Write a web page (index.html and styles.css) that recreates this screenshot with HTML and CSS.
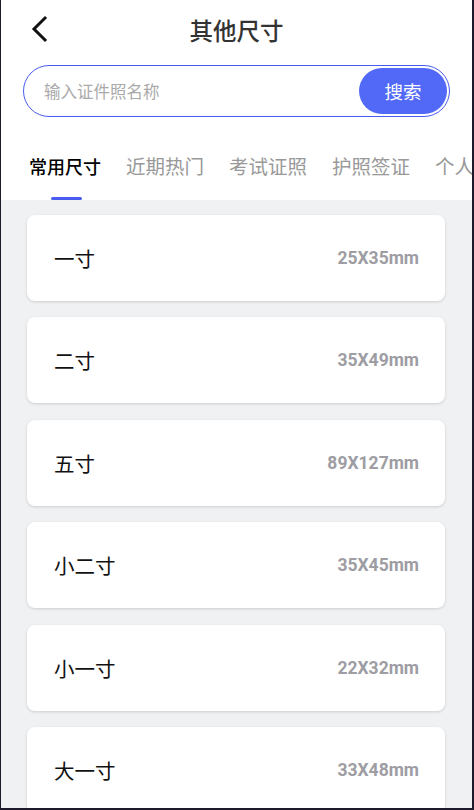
FILE: index.html
```html
<!DOCTYPE html>
<html>
<head>
  <meta charset="utf-8">
  <title>其他尺寸</title>
  <link rel="stylesheet" href="styles.css">
</head>
<body>
  <div class="page">
    <div class="header">
      <svg class="back" width="20" height="28" viewBox="0 0 20 28">
        <path d="M15 3 L4 14 L15 25" fill="none" stroke="#111" stroke-width="3" stroke-linecap="square"/>
      </svg>
      <h1>其他尺寸</h1>
    </div>

    <div class="search">
      <span class="placeholder">输入证件照名称</span>
      <button class="search-btn">搜索</button>
    </div>

    <div class="tabs">
      <div class="tab active">常用尺寸</div>
      <div class="tab">近期热门</div>
      <div class="tab">考试证照</div>
      <div class="tab">护照签证</div>
      <div class="tab">个人证照</div>
    </div>

    <div class="list">
      <div class="card"><span class="name">一寸</span><span class="size">25X35mm</span></div>
      <div class="card"><span class="name">二寸</span><span class="size">35X49mm</span></div>
      <div class="card"><span class="name">五寸</span><span class="size">89X127mm</span></div>
      <div class="card"><span class="name">小二寸</span><span class="size">35X45mm</span></div>
      <div class="card"><span class="name">小一寸</span><span class="size">22X32mm</span></div>
      <div class="card"><span class="name">大一寸</span><span class="size">33X48mm</span></div>
    </div>
  </div>
</body>
</html>
```

FILE: styles.css
```css
body {
  margin: 0;
  font-family: Roboto, "Noto Sans CJK SC", sans-serif;
}

.page {
  width: 474px;
  height: 810px;
  box-sizing: border-box;
  border-left: 1px solid #1d1b2b;
  border-right: 2px solid #1d1b2b;
  border-bottom: 2px solid #1d1b2b;
  background: #fff;
  overflow: hidden;
  display: flex;
  flex-direction: column;
}

.header {
  flex-shrink: 0;
  height: 60px;
  display: flex;
  align-items: center;
  justify-content: center;
  position: relative;
}

.back {
  position: absolute;
  left: 29px;
  top: 15px;
}

.header h1 {
  margin: 0;
  font-size: 23.5px;
  font-weight: 500;
  color: #333;
}

.search {
  flex-shrink: 0;
  margin: 5px 22px 0 22px;
  height: 52px;
  box-sizing: border-box;
  border: 1px solid #4a5cf0;
  border-radius: 26px;
  display: flex;
  align-items: center;
  justify-content: space-between;
  padding: 0 2px 0 20px;
}

.placeholder {
  font-size: 16.5px;
  color: #aaa;
}

.search-btn {
  width: 88px;
  height: 46px;
  border: none;
  border-radius: 23px;
  background-color: #5169f6;
  color: #fff;
  font-size: 18.5px;
  font-family: inherit;
}

.tabs {
  flex-shrink: 0;
  display: flex;
  gap: 25px;
  padding: 37px 0 0 28px;
  height: 83px;
  box-sizing: border-box;
  align-items: flex-start;
  white-space: nowrap;
  overflow: hidden;
}

.tab {
  font-size: 19.5px;
  line-height: 28px;
  color: #999;
  position: relative;
}

.tab.active {
  font-size: 18px;
  font-weight: 500;
  color: #000;
}

.tab.active::after {
  content: "";
  position: absolute;
  left: 22px;
  top: 43px;
  width: 31px;
  height: 3px;
  border-radius: 2px;
  background: #4a5cf0;
}

.list {
  flex: 1;
  background: #f0f1f3;
  padding: 15px 27px 0 26px;
  display: flex;
  flex-direction: column;
  gap: 16.4px;
}

.card {
  flex-shrink: 0;
  height: 86px;
  background: #fff;
  border-radius: 8px;
  box-shadow: 0 1px 3px rgba(0, 0, 0, 0.15);
  display: flex;
  align-items: center;
  justify-content: space-between;
  padding: 0 26px 0 27px;
}

.name {
  font-size: 20.5px;
  color: #111;
}

.size {
  font-size: 17.5px;
  font-weight: bold;
  color: #9d9da3;
}
```
